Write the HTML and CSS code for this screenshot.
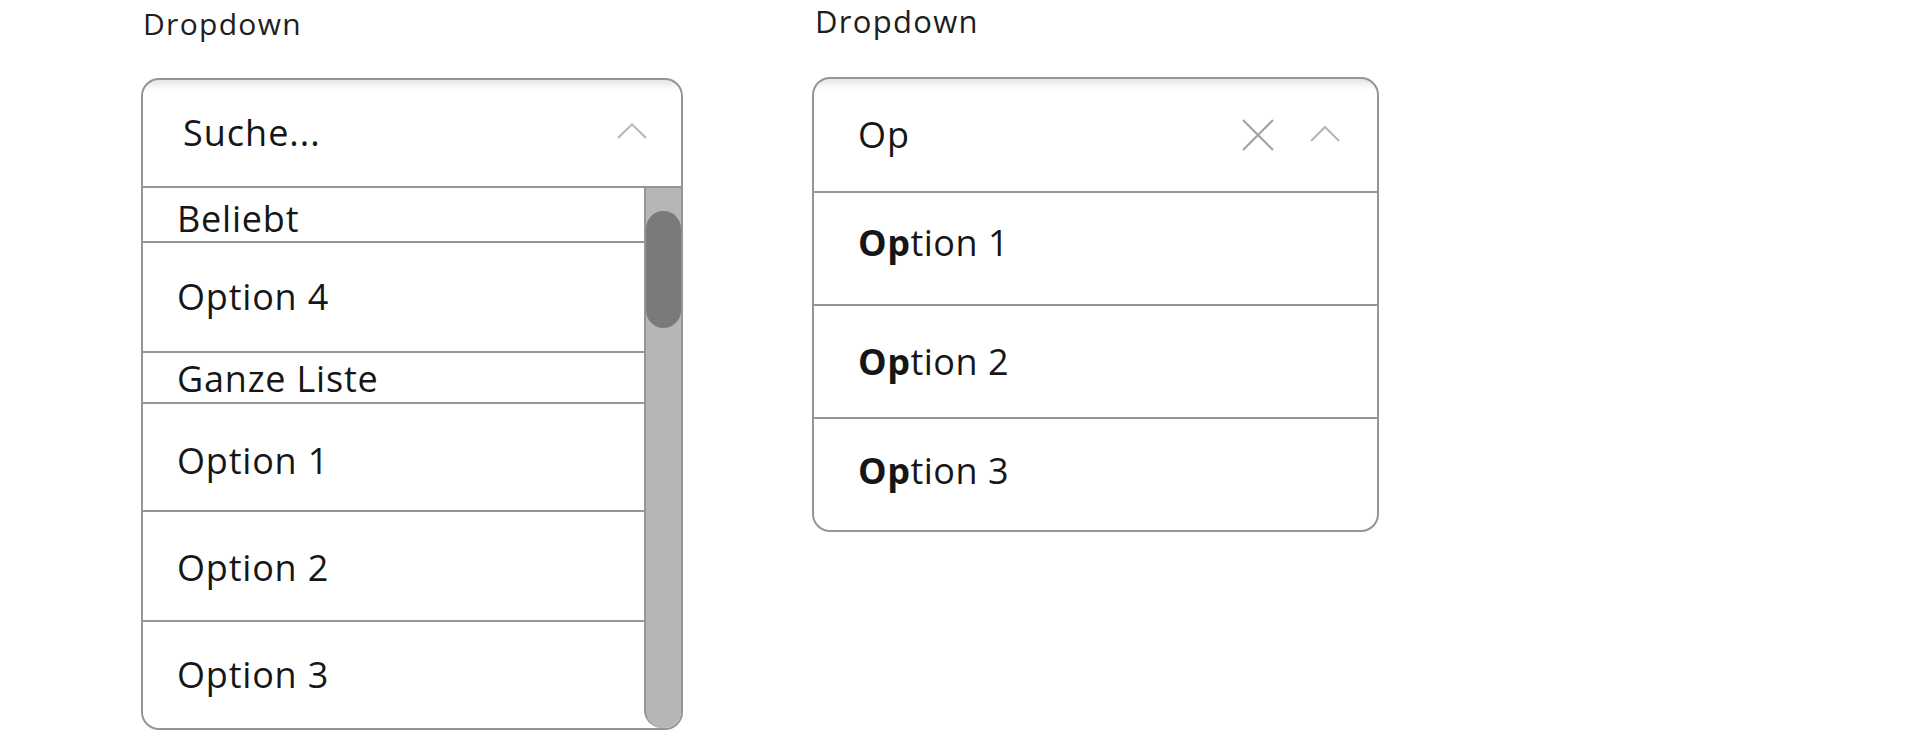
FILE: index.html
```html
<!DOCTYPE html>
<html lang="de">
<head>
<meta charset="utf-8">
<title>Dropdown</title>
<link rel="stylesheet" href="styles.css">
</head>
<body>
<div class="page">
  <section class="column">
    <div class="label label--left">Dropdown</div>
    <div class="dropdown dropdown--left">
      <div class="dropdown-header dropdown-header--left">
        <span class="field-text">Suche...</span>
        <svg class="chevron" width="30" height="16" viewBox="0 0 30 16"><path d="M1 15 L15 1.4 L29 15" fill="none" stroke="#b4b4b4" stroke-width="2"/></svg>
      </div>
      <div class="list">
        <div class="items">
          <div class="row row--group row--beliebt">Beliebt</div>
          <div class="row row--opt4">Option 4</div>
          <div class="row row--group row--ganze">Ganze Liste</div>
          <div class="row row--opt1">Option 1</div>
          <div class="row row--opt2">Option 2</div>
          <div class="row row--opt3">Option 3</div>
        </div>
        <div class="scrollbar">
          <div class="thumb"></div>
        </div>
      </div>
    </div>
  </section>

  <section class="column">
    <div class="label label--right">Dropdown</div>
    <div class="dropdown dropdown--right">
      <div class="dropdown-header dropdown-header--right">
        <span class="field-text">Op</span>
        <div class="icons">
          <svg class="clear" width="32" height="32" viewBox="0 0 32 32"><path d="M1 1 L31 31 M31 1 L1 31" fill="none" stroke="#a3a3a3" stroke-width="2.2"/></svg>
          <svg class="chevron" width="30" height="18" viewBox="0 0 30 18"><path d="M1 17 L15 3 L29 17" fill="none" stroke="#b4b4b4" stroke-width="2"/></svg>
        </div>
      </div>
      <div class="result result--1"><b class="hl">Op</b>tion 1</div>
      <div class="result result--2"><b class="hl">Op</b>tion 2</div>
      <div class="result result--3"><b class="hl">Op</b>tion 3</div>
    </div>
  </section>
</div>
</body>
</html>
```

FILE: styles.css
```css
* { box-sizing: border-box; }
html, body { margin: 0; padding: 0; background: #ffffff; }
body {
  font-family: "Open Sans", "Liberation Sans", sans-serif;
  color: #161616;
}

.page {
  display: flex;
  align-items: flex-start;
  gap: 129px;
  padding-left: 141px;
}

.column {
  display: flex;
  flex-direction: column;
}

.label {
  font-size: 30px;
  line-height: 40px;
  letter-spacing: 1.3px;
  color: #1e1e1e;
  padding-left: 2px;
}
.label--left { margin-top: 4px; margin-bottom: 34px; }
.label--right { font-size: 31px; margin-top: 1px; margin-bottom: 36px; padding-left: 3px; }

.dropdown {
  border: 2px solid #959595;
  border-radius: 18px;
  overflow: hidden;
  background: #ffffff;
}
.dropdown--left { width: 542px; height: 652px; }
.dropdown--right { width: 567px; height: 455px; }

.dropdown-header {
  display: flex;
  align-items: center;
  justify-content: space-between;
  border-bottom: 2px solid #959595;
  box-shadow: inset 0 12px 10px -8px rgba(0, 0, 0, 0.13);
}
.dropdown-header--left { height: 108px; padding: 0 34px 0 40px; }
.dropdown-header--right { height: 114px; padding: 0 37px 0 44px; }

.field-text {
  font-size: 36px;
  line-height: 1;
  letter-spacing: 1px;
}

.icons {
  display: flex;
  align-items: center;
  gap: 36px;
}
.chevron { display: block; }
.dropdown-header--left .chevron { margin-bottom: 4px; }
.dropdown-header--right .chevron { margin-bottom: 4px; }
.clear { display: block; }

.list {
  display: flex;
  height: 540px;
}
.items { flex: 1; }

.row {
  display: flex;
  align-items: center;
  padding-left: 34px;
  font-size: 36px;
  line-height: 1;
  letter-spacing: 0.8px;
  border-bottom: 2px solid #959595;
}
.row--beliebt { height: 55px; padding-top: 9px; }
.row--opt4 { height: 110px; }
.row--ganze { height: 51px; padding-top: 2px; }
.row--opt1 { height: 108px; padding-top: 8px; }
.row--opt2 { height: 110px; padding-top: 4px; }
.row--opt3 { height: 106px; border-bottom: 0; }

.scrollbar {
  width: 37px;
  background: #b6b6b8;
  border-left: 2px solid #959595;
  border-bottom-left-radius: 18px;
  padding-top: 23px;
}
.thumb {
  height: 117px;
  background: #7a7a7a;
  border-radius: 18px;
}

.result {
  display: flex;
  align-items: center;
  height: 113px;
  padding-left: 44px;
  font-size: 36px;
  line-height: 1;
  letter-spacing: 0.5px;
  border-bottom: 2px solid #959595;
}
.result--1 { padding-bottom: 11px; }
.result--2 { padding-bottom: 0; }
.result--3 { height: 111px; padding-bottom: 8px; border-bottom: 0; }
.hl { font-weight: 700; }
```
